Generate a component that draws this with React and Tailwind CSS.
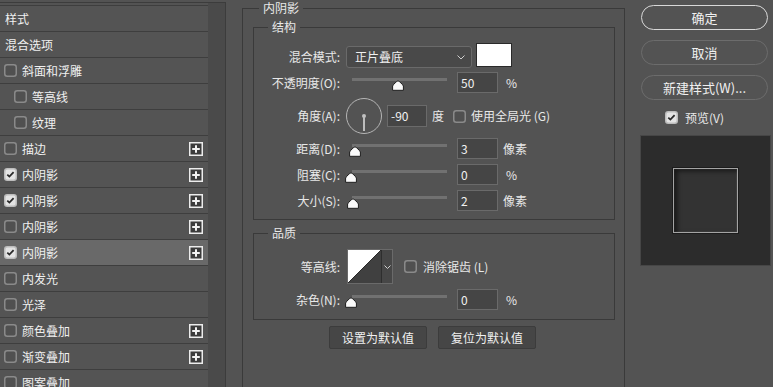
import React from 'react';

const font = { fontFamily: '"Noto Sans CJK SC", "Noto Sans", sans-serif' };

const rows = [
  { label: '样式', plain: true },
  { label: '混合选项', plain: true },
  { label: '斜面和浮雕' },
  { label: '等高线', indent: true },
  { label: '纹理', indent: true },
  { label: '描边', plus: true },
  { label: '内阴影', checked: true, plus: true },
  { label: '内阴影', checked: true, plus: true },
  { label: '内阴影', plus: true },
  { label: '内阴影', checked: true, plus: true, active: true },
  { label: '内发光' },
  { label: '光泽' },
  { label: '颜色叠加', plus: true },
  { label: '渐变叠加', plus: true },
  { label: '图案叠加' },
];

const Check = ({ checked }) => (
  <svg width="13" height="13" viewBox="0 0 13 13" className="shrink-0">
    <rect x="0.75" y="0.75" width="11.5" height="11.5" rx="2.5"
      fill={checked ? '#e4e4e4' : '#505050'} stroke={checked ? '#bdbdbd' : '#8a8a8a'} strokeWidth="1.5" />
    {checked && <path d="M3.3 6.6 L5.4 8.6 L9.6 4.2" fill="none" stroke="#2a2a2a" strokeWidth="1.8" />}
  </svg>
);

const Plus = () => (
  <svg width="14" height="14" viewBox="0 0 14 14">
    <rect x="0.75" y="0.75" width="12.5" height="12.5" fill="#3b3b3b" stroke="#ececec" strokeWidth="1.5" />
    <path d="M7 3.2 V10.8 M3.2 7 H10.8" stroke="#f2f2f2" strokeWidth="2" />
  </svg>
);

const Thumb = ({ left }) => (
  <svg width="12" height="11" viewBox="0 0 12 11" className="absolute top-[8px]" style={{ left }}>
    <path d="M6 0.8 C7 0.8 11 4.8 11.4 6 V10.3 H0.6 V6 C1 4.8 5 0.8 6 0.8 Z" fill="#fafafa" stroke="#1e1e1e" strokeWidth="1" />
  </svg>
);

const Slider = ({ left }) => (
  <div className="relative w-[95px] h-[21px] ml-[12px] shrink-0">
    <div className="absolute left-0 right-0 top-[6px] h-[3px] bg-[#717171]" />
    <Thumb left={left} />
  </div>
);

const Field = ({ value, w = 'w-[41px]', h = 'h-[21px]' }) => (
  <div className={`${w} ${h} shrink-0 bg-[#454545] border border-[#6a6a6a] text-[12px] text-[#f2f2f2] pl-[3px] flex items-center`}>
    {value}
  </div>
);

const Label = ({ children }) => (
  <div className="w-[86px] shrink-0 text-right text-[12px] text-[#e8e8e8] whitespace-nowrap">{children}</div>
);

const SliderRow = ({ label, left, value, unit, mt }) => (
  <div className={`flex items-center h-[21px] ${mt}`}>
    <Label>{label}</Label>
    <Slider left={left} />
    <div className="ml-[10px]"><Field value={value} /></div>
    <span className={`text-[12px] text-[#e8e8e8] ${unit === '%' ? 'ml-[8px]' : 'ml-[5px]'}`}>{unit}</span>
  </div>
);

const Btn = ({ children, primary }) => (
  <div className={`w-[127px] h-[25px] rounded-full flex items-center justify-center text-[13px] text-[#f0f0f0] border-[1.5px] ${primary ? 'border-[#d8d8d8]' : 'border-[#6c6c6c]'}`}>
    {children}
  </div>
);

export default function App() {
  return (
    <div className="w-[773px] h-[387px] bg-[#535353] flex overflow-hidden select-none" style={font}>
      {/* Style list */}
      <div className="w-[226px] shrink-0 pt-[2px]">
        <div className="h-[400px] border-t border-r border-[#3c3c3c] flex">
          <div className="w-[208px] mt-[2px] border-t border-[#3e3e3e]">
            {rows.map((r, i) => (
              <div key={i}
                className={`h-[26px] border-b border-[#3e3e3e] flex items-center text-[12px] text-[#f0f0f0] ${r.active ? 'bg-[#696969]' : 'bg-[#545454]'} ${r.plain ? 'pl-[5px]' : r.indent ? 'pl-[14px]' : 'pl-[4px]'}`}>
                {!r.plain && <Check checked={r.checked} />}
                <span className={r.plain ? '' : 'ml-[5px]'}>{r.label}</span>
                {r.plus && <div className="ml-auto mr-[5px] flex"><Plus /></div>}
              </div>
            ))}
          </div>
          <div className="flex-1 bg-[#4a4a4a]" />
        </div>
      </div>

      {/* Settings */}
      <div className="w-[399px] shrink-0 pl-[16px]">
        <fieldset className="w-[383px] h-[420px] border border-[#3a3a3a]">
          <legend className="ml-[16px] px-[4px] text-[12px] leading-[16px] text-[#e8e8e8]">内阴影</legend>

          <fieldset className="mt-[3px] ml-[10px] mr-[9px] border border-[#3a3a3a] pb-[8px]">
            <legend className="ml-[14px] px-[4px] text-[12px] leading-[16px] text-[#e8e8e8]">结构</legend>

            <div className="flex items-start h-[25px] mt-[8px]">
              <div className="mt-[5px]"><Label>混合模式:</Label></div>
              <div className="ml-[6px] mt-[3px] w-[126px] h-[22px] rounded-[3px] bg-[#494949] border border-[#6a6a6a] flex items-center pl-[8px] pr-[6px] text-[12px] text-[#f0f0f0]">
                <span>正片叠底</span>
                <svg width="8" height="5" viewBox="0 0 8 5" className="ml-auto"><path d="M0.5 0.5 L4 4 L7.5 0.5" fill="none" stroke="#cfcfcf" strokeWidth="1" /></svg>
              </div>
              <div className="ml-[4px] w-[36px] h-[24px] bg-white border border-[#2a2a2a]" />
            </div>

            <SliderRow label="不透明度(O):" left={40} value="50" unit="%" mt="mt-[4px]" />

            <div className="flex items-center h-[36px] mt-[5px]">
              <Label>角度(A):</Label>
              <div className="ml-[6px] w-[36px] h-[36px] rounded-full border border-[#b5b5b5] flex justify-center shrink-0">
                <div className="mt-[15px] flex flex-col items-center">
                  <div className="w-[4px] h-[4px] rounded-full bg-[#c0c0c0]" />
                  <div className="w-[2px] h-[14px] bg-[#bdbdbd] -mt-[1px]" />
                </div>
              </div>
              <div className="ml-[5px]"><Field value="-90" w="w-[40px]" h="h-[22px]" /></div>
              <span className="ml-[5px] text-[12px] text-[#e8e8e8]">度</span>
              <div className="ml-[9px] flex"><Check /></div>
              <span className="ml-[5px] text-[12px] text-[#e8e8e8] whitespace-nowrap">使用全局光 (G)</span>
            </div>

            <SliderRow label="距离(D):" left={-3} value="3" unit="像素" mt="mt-[4px]" />
            <SliderRow label="阻塞(C):" left={-7} value="0" unit="%" mt="mt-[5px]" />
            <SliderRow label="大小(S):" left={-5} value="2" unit="像素" mt="mt-[5px]" />
          </fieldset>

          <fieldset className="mt-[5px] ml-[10px] mr-[9px] border border-[#3a3a3a] pb-[9px]">
            <legend className="ml-[14px] px-[4px] text-[12px] leading-[16px] text-[#e8e8e8]">品质</legend>

            <div className="flex items-center h-[35px] mt-[8px]">
              <Label>等高线:</Label>
              <div className="ml-[7px] h-[35px] flex border border-[#6a6a6a] bg-[#474747]">
                <svg width="33" height="33" viewBox="0 0 33 33" className="block">
                  <rect width="33" height="33" fill="#404040" />
                  <polygon points="0,0 33,0 0,33" fill="#ffffff" />
                  <line x1="0" y1="33" x2="33" y2="0" stroke="#2a2a2a" strokeWidth="1" />
                </svg>
                <div className="w-[11px] border-l border-[#2e2e2e] flex items-center justify-center">
                  <svg width="7" height="4" viewBox="0 0 7 4"><path d="M0.5 0.5 L3.5 3.5 L6.5 0.5" fill="none" stroke="#cfcfcf" strokeWidth="1" /></svg>
                </div>
              </div>
              <div className="ml-[11px] flex"><Check /></div>
              <span className="ml-[6px] text-[12px] text-[#e8e8e8] whitespace-nowrap">消除锯齿 (L)</span>
            </div>

            <SliderRow label="杂色(N):" left={-7} value="0" unit="%" mt="mt-[5px]" />
          </fieldset>

          <div className="flex gap-[11px] ml-[86px] mt-[6px]">
            <div className="w-[98px] h-[23px] rounded-[2px] bg-[#464646] border border-[#3c3c3c] flex items-center justify-center text-[12px] text-[#f0f0f0]">设置为默认值</div>
            <div className="w-[98px] h-[23px] rounded-[2px] bg-[#464646] border border-[#3c3c3c] flex items-center justify-center text-[12px] text-[#f0f0f0]">复位为默认值</div>
          </div>
        </fieldset>
      </div>

      {/* Actions */}
      <div className="flex-1 pl-[16px] pt-[5px] flex flex-col">
        <div className="flex flex-col gap-[10px]">
          <Btn primary>确定</Btn>
          <Btn>取消</Btn>
          <Btn>新建样式(W)...</Btn>
        </div>
        <div className="flex items-center mt-[11px] ml-[24px] h-[13px]">
          <Check checked />
          <span className="ml-[7px] text-[12px] text-[#e8e8e8]">预览(V)</span>
        </div>
        <div className="mt-[11px] -ml-[1px] w-[131px] h-[131px] bg-[#2c2c2c] border border-[#464646] flex items-center justify-center">
          <div className="w-[65px] h-[65px] bg-[#333333] border border-[#a4a4a4] shadow-[inset_3px_2px_5px_rgba(0,0,0,0.6),inset_0_0_2px_rgba(255,255,255,0.25)] ring-1 ring-[#1c1c1c]" />
        </div>
      </div>
    </div>
  );
}
